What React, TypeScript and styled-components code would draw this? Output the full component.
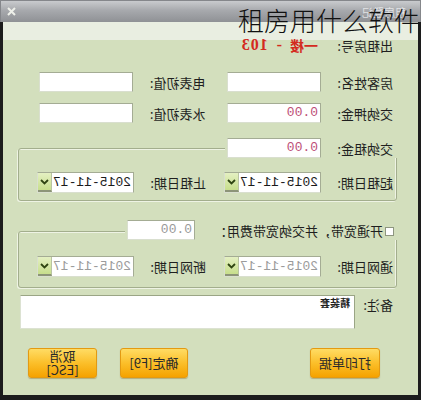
import React from "react";
import styled, { createGlobalStyle } from "styled-components";

const GlobalStyle = createGlobalStyle`
  html, body { margin: 0; padding: 0; background: #fff; }
  body { font-family: "Noto Sans CJK SC", "Liberation Sans", sans-serif; }
`;

const GREEN = "#d3dfbd";

const Stage = styled.div`
  position: relative;
  width: 421px;
  height: 400px;
  overflow: hidden;
`;

// the screenshot is a mirrored copy of the dialog
const Dialog = styled.div`
  width: 421px;
  height: 400px;
  transform: scaleX(-1);
  display: flex;
  flex-direction: column;
`;

const TitleBar = styled.div`
  flex: 0 0 22px;
  box-sizing: border-box;
  background: linear-gradient(#c9cbce, #a7a9ad 45%, #8f9195);
  border: 1px solid #85878b;
  border-bottom: none;
  display: flex;
  align-items: center;
  justify-content: space-between;
  padding: 0 5px 0 14px;
`;

const TitleText = styled.span`
  font-size: 11px;
  color: #eef0f2;
  opacity: 0.8;
`;

const CloseBtn = styled.span`
  width: 12px;
  height: 12px;
  display: flex;
  align-items: center;
  justify-content: center;
`;

const Body = styled.div`
  flex: 1;
  box-sizing: border-box;
  background: linear-gradient(#e9eee1 0 18px, ${GREEN} 18px);
  border-left: 3px solid #1c1c1c;
  border-right: 3px solid #1c1c1c;
  border-bottom: 5px solid #1c1c1c;
  padding: 13px 15px 0 21px;
  display: flex;
  flex-direction: column;
`;

const Row = styled.div<{ $top?: number; $pad?: number }>`
  display: flex;
  align-items: center;
  height: 20px;
  margin-top: ${({ $top }) => $top || 0}px;
  padding-left: ${({ $pad }) => ($pad === undefined ? 4 : $pad)}px;
`;

const Pair = styled.div`
  display: flex;
  align-items: center;
  width: 200px;
`;

const Label = styled.span<{ $w?: number }>`
  width: ${({ $w }) => $w || 72}px;
  flex: 0 0 auto;
  font-size: 13px;
  color: #1f1f1f;
  white-space: nowrap;
`;

const RoomValue = styled.span`
  display: flex;
  align-items: center;
  gap: 8px;
  margin-left: 3px;
  font-size: 14px;
  font-weight: bold;
  color: #d42a1e;
  white-space: nowrap;
`;

const RoomNum = styled.span`
  font-family: "Liberation Serif", serif;
  font-size: 16px;
  letter-spacing: 1px;
`;

const TextBox = styled.div<{ $w?: number; $color?: string }>`
  width: ${({ $w }) => $w || 94}px;
  height: 20px;
  box-sizing: border-box;
  background: #fff;
  border: 1px solid #a4ac94;
  border-right-color: #d9dfcf;
  border-bottom-color: #d9dfcf;
  font-family: "Liberation Mono", monospace;
  font-size: 13px;
  line-height: 18px;
  padding-left: 2px;
  color: ${({ $color }) => $color || "#222"};
`;

const Combo = styled.div<{ $disabled?: boolean }>`
  width: 97px;
  height: 21px;
  box-sizing: border-box;
  display: flex;
  background: #fff;
  border: 1px solid #a4ac94;
  border-right-color: #d9dfcf;
  border-bottom-color: #d9dfcf;
  font-family: "Liberation Mono", monospace;
  font-size: 13px;
  line-height: 19px;
  color: ${({ $disabled }) => ($disabled ? "#9b9b9b" : "#1a1a1a")};
`;

const ComboText = styled.span`
  flex: 1;
  padding-left: 2px;
  white-space: nowrap;
`;

const ComboButton = styled.span`
  width: 14px;
  flex: 0 0 14px;
  background: linear-gradient(#e4f0c2, #c7de8c);
  border-left: 1px solid #b9c4a2;
  border-bottom: 2px solid #8c9478;
  box-sizing: border-box;
  display: flex;
  align-items: center;
  justify-content: center;
`;

const Group = styled.div<{ $top: number; $padTop: number; $padBottom: number }>`
  position: relative;
  margin-top: ${({ $top }) => $top}px;
  padding: ${({ $padTop }) => $padTop}px 0 ${({ $padBottom }) => $padBottom}px 3px;
  border: 1px solid #a3ae8d;
  border-radius: 3px;
  box-shadow: inset 1px 1px 0 #eef3e4, 1px 1px 0 #eef3e4;
`;

const Legend = styled.div<{ $top: number; $pad: number }>`
  position: absolute;
  top: ${({ $top }) => $top}px;
  left: -1px;
  height: 20px;
  display: flex;
  align-items: center;
  padding: 0 2px 0 ${({ $pad }) => $pad}px;
  background: ${GREEN};
`;

const CheckBox = styled.span`
  width: 9px;
  height: 9px;
  box-sizing: border-box;
  background: #fff;
  border: 1px solid #8e9680;
  margin-right: 2px;
  margin-top: 2px;
`;

const RemarkRow = styled.div`
  display: flex;
  margin-top: 7px;
  padding-left: 4px;
`;

const RemarkBox = styled.div`
  width: 335px;
  height: 34px;
  box-sizing: border-box;
  background: #fff;
  border: 1px solid #9aa585;
  border-right-color: #dce2d2;
  border-bottom-color: #dce2d2;
  padding: 1px 4px;
  font-size: 10px;
  font-weight: bold;
  color: #222;
  line-height: 12px;
`;

const ButtonRow = styled.div`
  display: flex;
  justify-content: space-between;
  margin-top: 19px;
  padding: 0 10px 0 17px;
`;

const ButtonGroup = styled.div`
  display: flex;
  gap: 23px;
`;

const OrangeButton = styled.button<{ $w: number }>`
  width: ${({ $w }) => $w}px;
  height: 30px;
  box-sizing: border-box;
  padding: 0;
  border: 1px solid #e39a12;
  border-radius: 3px;
  background: linear-gradient(#ffdc64, #fbbf2a 50%, #f5a200);
  box-shadow: 0 1px 1px rgba(120, 80, 0, 0.35);
  font-family: "Noto Sans CJK SC", sans-serif;
  font-size: 13px;
  line-height: 14px;
  color: #2a2a2a;
  text-align: center;
`;

const Overlay = styled.div`
  position: absolute;
  top: 2px;
  right: 1px;
  font-family: "Noto Sans CJK SC", sans-serif;
  font-weight: 300;
  font-size: 26px;
  line-height: 36px;
  color: #111;
`;

const Chevron = () => (
  <svg width="9" height="6" viewBox="0 0 9 6">
    <path d="M1 1 L4.5 4.5 L8 1" fill="none" stroke="#2f4412" strokeWidth="1.8" />
  </svg>
);

const DateBox = ({ value, disabled }: { value: string; disabled?: boolean }) => (
  <Combo $disabled={disabled}>
    <ComboText>{value}</ComboText>
    <ComboButton>
      <Chevron />
    </ComboButton>
  </Combo>
);

export default function App() {
  return (
    <Stage>
      <GlobalStyle />
      <Dialog>
        <TitleBar>
          <TitleText>租房登记</TitleText>
          <CloseBtn>
            <svg width="9" height="9" viewBox="0 0 9 9">
              <path d="M1 1 L8 8 M8 1 L1 8" stroke="#eef0ea" strokeWidth="2" />
            </svg>
          </CloseBtn>
        </TitleBar>
        <Body>
          <Row>
            <Label $w={72}>出租房号:</Label>
            <RoomValue>
              <span>一楼</span>
              <RoomNum>-</RoomNum>
              <RoomNum>103</RoomNum>
            </RoomValue>
          </Row>
          <Row $top={17}>
            <Pair>
              <Label>房客姓名:</Label>
              <TextBox />
            </Pair>
            <Pair>
              <Label>电表初值:</Label>
              <TextBox />
            </Pair>
          </Row>
          <Row $top={11}>
            <Pair>
              <Label>交纳押金:</Label>
              <TextBox $color="#bd4f78">0.00</TextBox>
            </Pair>
            <Pair>
              <Label>水表初值:</Label>
              <TextBox />
            </Pair>
          </Row>

          <Group $top={25} $padTop={23} $padBottom={7}>
            <Legend $top={-11} $pad={4}>
              <Label>交纳租金:</Label>
              <TextBox $color="#bd4f78">0.00</TextBox>
            </Legend>
            <Row $pad={0} style={{ height: 21 }}>
              <Pair>
                <Label>起租日期:</Label>
                <DateBox value="2015-11-17" />
              </Pair>
              <Pair>
                <Label>止租日期:</Label>
                <DateBox value="2015-11-17" />
              </Pair>
            </Row>
          </Group>

          <Group $top={30} $padTop={24} $padBottom={10}>
            <Legend $top={-12} $pad={3}>
              <CheckBox />
              <Label $w={188}>开通宽带，并交纳宽带费用：</Label>
              <TextBox $w={68} $color="#9a9a9a">0.00</TextBox>
            </Legend>
            <Row $pad={0} style={{ height: 21 }}>
              <Pair>
                <Label>通网日期:</Label>
                <DateBox value="2015-11-17" disabled />
              </Pair>
              <Pair>
                <Label>断网日期:</Label>
                <DateBox value="2015-11-17" disabled />
              </Pair>
            </Row>
          </Group>

          <RemarkRow>
            <Label $w={38}>备注:</Label>
            <RemarkBox>精装套</RemarkBox>
          </RemarkRow>

          <ButtonRow>
            <OrangeButton $w={70}>打印单据</OrangeButton>
            <ButtonGroup>
              <OrangeButton $w={68}>确定[F9]</OrangeButton>
              <OrangeButton $w={69}>
                取消
                <br />
                [ESC]
              </OrangeButton>
            </ButtonGroup>
          </ButtonRow>
        </Body>
      </Dialog>
      <Overlay>租房用什么软件</Overlay>
    </Stage>
  );
}
